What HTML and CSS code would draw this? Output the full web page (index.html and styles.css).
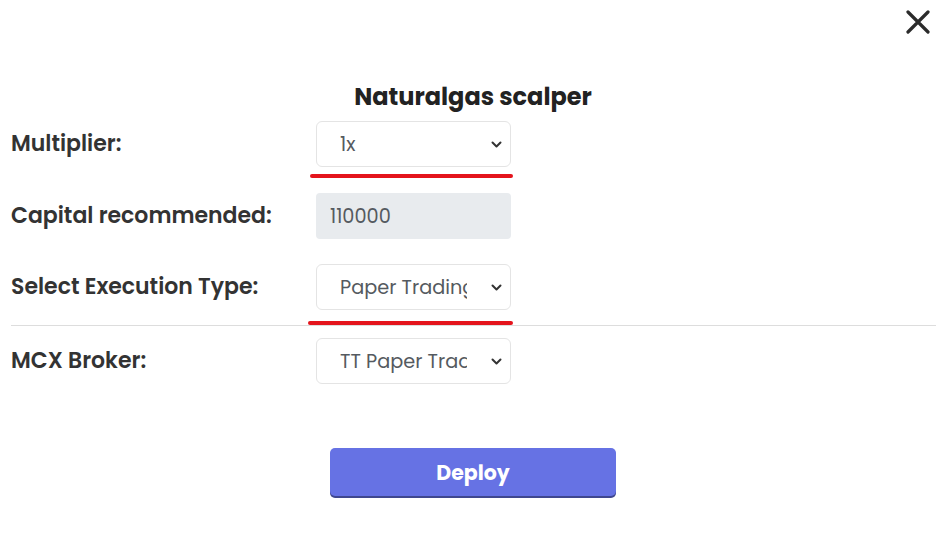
FILE: index.html
```html
<!DOCTYPE html>
<html>
<head>
<meta charset="utf-8">
<link rel="stylesheet" href="styles.css">
</head>
<body>
<div class="modal">
  <div class="header">
    <button class="close" aria-label="Close">
      <svg width="24" height="24" viewBox="0 0 24 24"><path d="M2 2 L22 22 M22 2 L2 22" stroke="#2b2b2b" stroke-width="3.2" stroke-linecap="round" fill="none"/></svg>
    </button>
  </div>
  <h2 class="title">Naturalgas scalper</h2>

  <div class="row row-first">
    <label class="label">Multiplier:</label>
    <div class="field-wrap">
      <div class="select"><span class="value">1x</span><svg class="chev" width="11" height="7" viewBox="0 0 11 7"><path d="M1.5 1.5 L5.5 5.5 L9.5 1.5" stroke="#333" stroke-width="2" fill="none" stroke-linecap="round" stroke-linejoin="round"/></svg></div>
      <div class="mark mark-1"></div>
    </div>
  </div>

  <div class="row row-second">
    <label class="label">Capital recommended:</label>
    <div class="field-wrap">
      <div class="input">110000</div>
    </div>
  </div>

  <div class="row row-third">
    <label class="label">Select Execution Type:</label>
    <div class="field-wrap">
      <div class="select"><span class="value">Paper Trading</span><svg class="chev" width="11" height="7" viewBox="0 0 11 7"><path d="M1.5 1.5 L5.5 5.5 L9.5 1.5" stroke="#333" stroke-width="2" fill="none" stroke-linecap="round" stroke-linejoin="round"/></svg></div>
      <div class="mark mark-2"></div>
    </div>
  </div>

  <hr class="divider">

  <div class="row row-fourth">
    <label class="label">MCX Broker:</label>
    <div class="field-wrap">
      <div class="select"><span class="value">TT Paper Trading</span><svg class="chev" width="11" height="7" viewBox="0 0 11 7"><path d="M1.5 1.5 L5.5 5.5 L9.5 1.5" stroke="#333" stroke-width="2" fill="none" stroke-linecap="round" stroke-linejoin="round"/></svg></div>
    </div>
  </div>

  <div class="actions">
    <button class="deploy">Deploy</button>
  </div>
</div>
</body>
</html>
```
FILE: styles.css
```css
html, body {
  margin: 0;
  padding: 0;
  background: #ffffff;
}
body {
  font-family: "Poppins", "Inter", "Noto Sans", sans-serif;
  color: #333333;
}
.modal {
  width: 940px;
  height: 559px;
  overflow: hidden;
}
.header {
  display: flex;
  justify-content: flex-end;
  padding: 10px 10px 0 0;
}
.close {
  border: 0;
  background: none;
  padding: 0;
  width: 24px;
  height: 24px;
  display: block;
}
.close svg { display: block; }
.title {
  margin: 47px 0 0 0;
  text-align: center;
  padding-left: 6px;
  font-size: 24px;
  line-height: 32px;
  font-weight: 700;
  color: #222222;
}
.row {
  display: flex;
  align-items: center;
  padding-left: 11px;
}
.row-first { margin-top: 8px; }
.row-second { margin-top: 26px; }
.row-third { margin-top: 25px; }
.row-fourth { margin-top: 12px; }
.label {
  width: 305px;
  font-size: 22px;
  line-height: 30px;
  font-weight: 600;
  color: #333333;
}
.field-wrap {
  position: relative;
  width: 195px;
}
.select {
  box-sizing: border-box;
  height: 46px;
  border: 1px solid #e4e4e4;
  border-radius: 6px;
  display: flex;
  align-items: center;
  padding-left: 23px;
  padding-right: 8px;
  background: #fff;
}
.value {
  width: 127px;
  overflow: hidden;
  white-space: nowrap;
  font-size: 19.3px;
  color: #555a60;
}
.chev {
  margin-left: auto;
  display: block;
}
.input {
  box-sizing: border-box;
  height: 46px;
  border-radius: 4px;
  background: #e8ebee;
  display: flex;
  align-items: center;
  padding-left: 14px;
  font-size: 19.3px;
  color: #555a60;
}
.mark {
  position: absolute;
  height: 4px;
  border-radius: 2px;
  background: #e4141c;
}
.mark-1 {
  left: -6px;
  right: -2px;
  top: 53px;
}
.mark-2 {
  left: -8px;
  right: -2px;
  top: 57px;
}
.divider {
  margin: 15px 4px 0 11px;
  border: 0;
  border-top: 1px solid #dddddd;
  height: 0;
}
.actions {
  padding-left: 330px;
  margin-top: 64px;
}
.deploy {
  width: 286px;
  height: 48px;
  border: 0;
  border-radius: 5px;
  background: #6672e4;
  box-shadow: 0 2px 0 #3f478f;
  color: #ffffff;
  font-family: inherit;
  font-size: 20.5px;
  font-weight: 700;
}
```
